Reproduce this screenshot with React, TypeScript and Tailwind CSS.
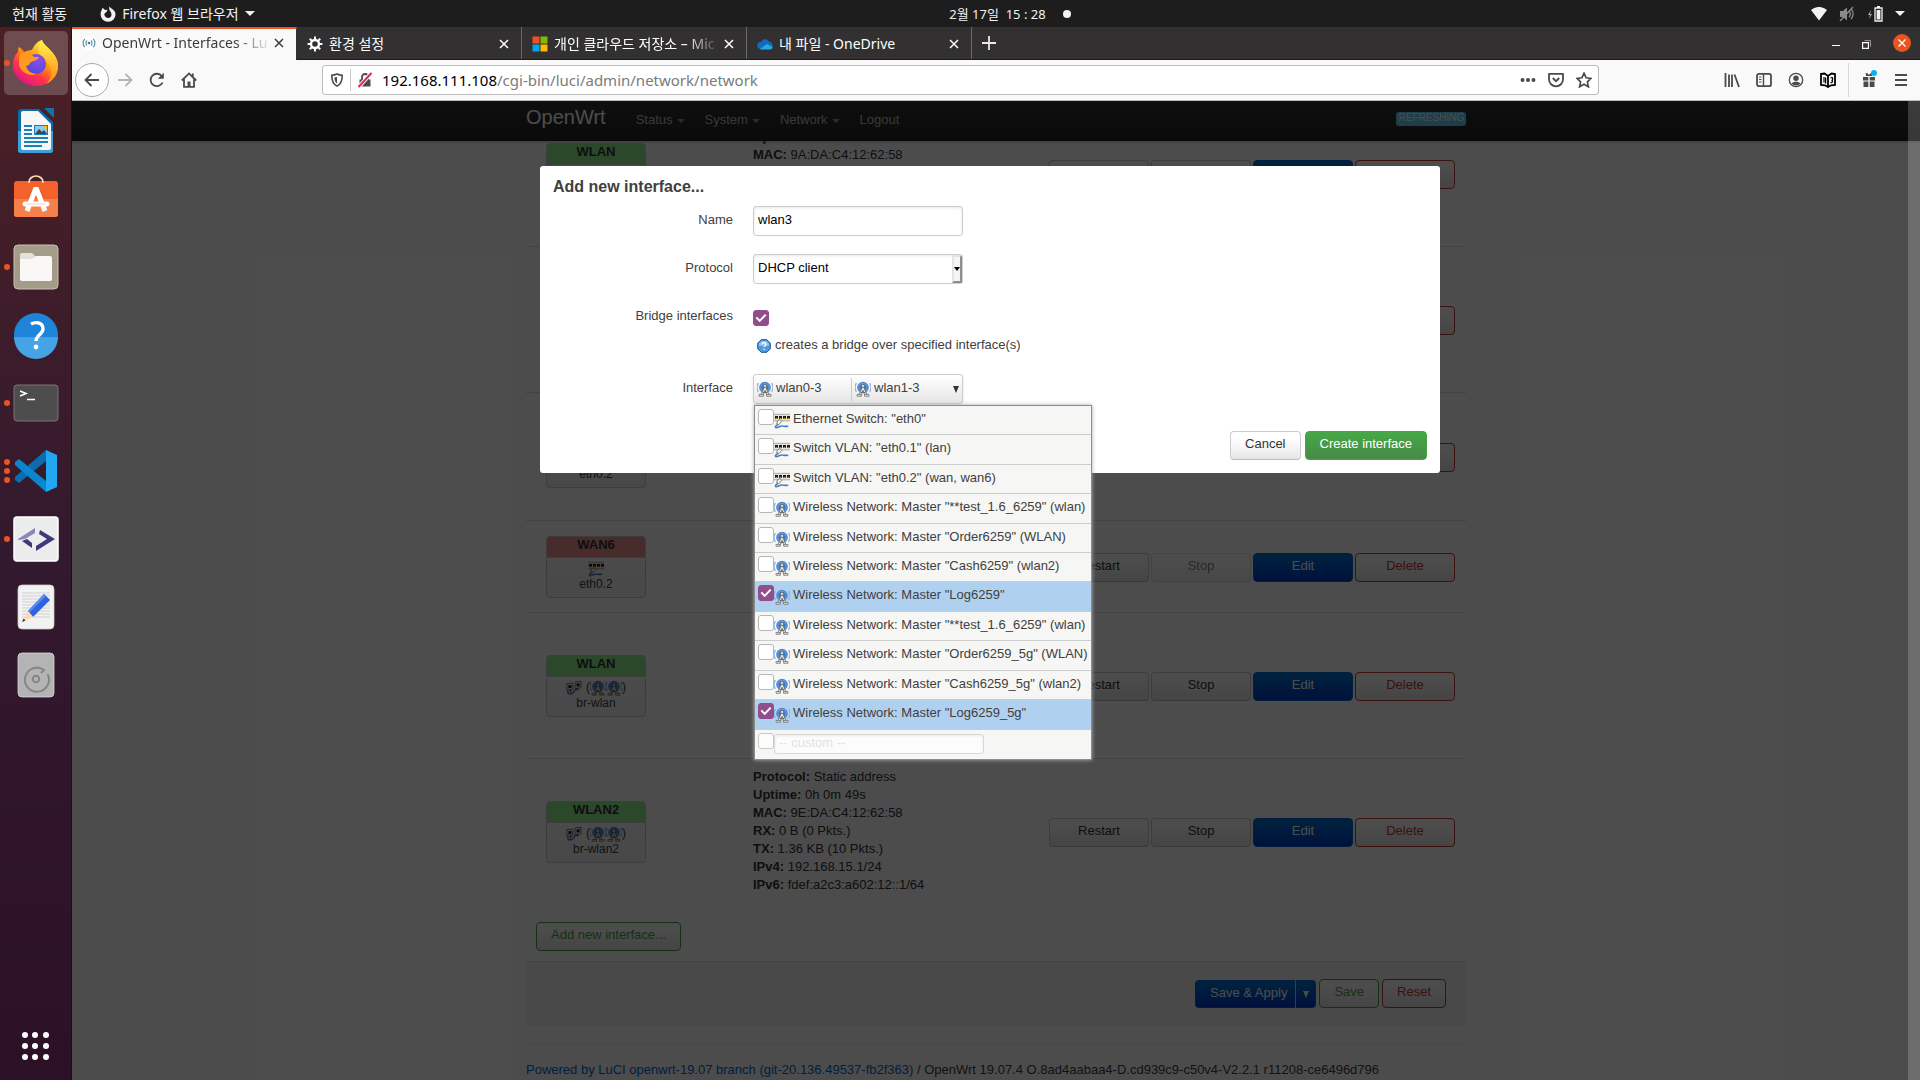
import React, { useState } from "react";

const UI = "font-['Noto_Sans','Noto_Sans_CJK_KR',sans-serif]";
const PAGE = "font-['Liberation_Sans','Noto_Sans_CJK_KR',sans-serif]";

/* ---------- small page icons ---------- */

function WifiIcon() {
  return (
    <svg width="16" height="16" viewBox="0 0 16 16" className="shrink-0" aria-hidden="true">
      <circle cx="8" cy="6.5" r="5.8" fill="#6d9fdc" />
      <circle cx="8" cy="6.5" r="3.6" fill="#3f78bf" />
      <circle cx="8" cy="6.5" r="5" fill="none" stroke="#4a80c4" strokeWidth="0.9" />
      <path d="M1.400 2.200a7.800 7.800 0 0 0 0 8.600M14.600 2.200a7.800 7.800 0 0 1 0 8.600" fill="none" stroke="#86aee0" strokeWidth="1.200" />
      <circle cx="8" cy="5" r="1.500" fill="#f4f4f2" stroke="#555753" strokeWidth="0.6" />
      <path d="M7.200 6.400L3.800 14h2.400L8 9.200l1.800 4.800h2.400L8.800 6.400z" fill="#eeeeec" stroke="#5c5e5a" strokeWidth="0.7" />
      <path d="M5.400 11.400h5.200" stroke="#6f716c" strokeWidth="1.200" />
      <path d="M2 13.400h4.400v1.900H2zM9.600 13.400H14v1.900H9.600z" fill="#d9dbd5" stroke="#6b6d68" strokeWidth="0.7" />
    </svg>
  );
}

function EthIcon() {
  return (
    <svg width="16" height="16" viewBox="0 0 16 16" className="shrink-0" aria-hidden="true">
      <rect x="0" y="1" width="16" height="7" fill="#e4e4de" />
      <path d="M0 1.300h16M0 7.800h16" stroke="#9c9d97" strokeWidth="0.8" />
      <path d="M1 3h3v3H1zM5 3h3v3H5zM9 3h3v3H9zM13 3h3v3h-3z" fill="#1c1c1a" />
      <path d="M1.500 5.400h2M5.500 5.400h2M9.500 5.400h2M13.500 5.400h2" stroke="#c4a000" strokeWidth="1" />
      <path d="M3 8.600l3-2.200 1.700 2-3 3.400-1.800-.8z" fill="#f2f2ef" stroke="#555753" strokeWidth="0.7" />
      <path d="M3.600 11.600C1.600 13 1 14.200 1.800 14.600c1.600.4 4-1.800 6.400-1.600 2 .1 3 .8 5.400.2" fill="none" stroke="#4a7cc0" strokeWidth="1.600" strokeLinecap="round" />
    </svg>
  );
}

function BridgeIcon() {
  return (
    <svg width="16" height="16" viewBox="0 0 16 16" className="shrink-0" aria-hidden="true">
      <path d="M.8 3.600l6-.6v6.400l-6 .8z" fill="#eeeeec" stroke="#666" strokeWidth="0.8" />
      <path d="M9 2l6-.8v6.600L9 8.600z" fill="#eeeeec" stroke="#666" strokeWidth="0.8" />
      <path d="M2.400 5.200l3-.3v3l-3 .3zM10.600 3.600l3-.3v3l-3 .3z" fill="#1c1c1a" />
      <path d="M2 10.600c-1 2.400.6 3.600 3 3.200 3.400-.6 2.400-4 5.400-4.600" fill="none" stroke="#4a7cc0" strokeWidth="1.600" strokeLinecap="round" />
      <path d="M4.600 9.400v3M11.600 8v2.400" stroke="#555" strokeWidth="1.400" />
    </svg>
  );
}

function HelpIcon() {
  return (
    <svg width="14" height="14" viewBox="0 0 14 14" className="shrink-0" aria-hidden="true">
      <path d="M4.200.7h5.600l3.500 3.500v5.600l-3.500 3.500H4.200L.7 9.800V4.200z" fill="#4f9be0" stroke="#1f4f8c" strokeWidth="1" />
      <path d="M4.700 1.900h4.600l2.800 2.800v2H1.900v-2z" fill="#8cc1f2" />
      <path d="M5.200 5.400c0-2.300 3.700-2.200 3.700 0 0 1.400-1.800 1.400-1.800 2.700M7.100 9.700v1.300" fill="none" stroke="#fff" strokeWidth="1.300" />
    </svg>
  );
}

/* ---------- form pieces ---------- */

function Tick({ id, label, initial = false }: { id: string; label?: string; initial?: boolean }) {
  const [on, setOn] = useState(initial);
  return (
    <span className="relative block size-4 shrink-0">
      <input
        id={id}
        type="checkbox"
        aria-label={label}
        checked={on}
        onChange={() => setOn(!on)}
        className="block size-4 appearance-none rounded-[3px] border border-[#b6b6b3] bg-white checked:border-[#924d8b] checked:bg-[#924d8b]"
      />
      {on && (
        <svg viewBox="0 0 16 16" className="pointer-events-none absolute inset-0 size-4" aria-hidden="true">
          <path d="M3.300 7.400l3.400 3.500 6-6.300" fill="none" stroke="#fff" strokeWidth="2" />
        </svg>
      )}
    </span>
  );
}

const BTN = "h-[29px] rounded border px-3.5 pb-[3px] text-[13px] leading-[18px]";
const PLAIN = "border-[#ccc] border-b-[#bbb] bg-linear-to-b from-white from-25% to-[#e6e6e6] text-[#333]";
const BLUE_BG = "bg-linear-to-b from-[#0074d0] to-[#0038c8] text-white";
const RED = "border-[#c43c35] bg-linear-to-b from-white from-25% to-[#e6e6e6] text-[#c43c35]";
const GREEN = "border-[#46a546] bg-linear-to-b from-white from-25% to-[#e6e6e6] text-[#46a546]";

/* ---------- interface table ---------- */

type Row = { name: string; dev: string; zone: "green" | "red"; kind: "eth" | "bridge"; stopped?: boolean; height: string; info: [string, string][] };

const rows: Row[] = [
  { name: "WLAN", dev: "", zone: "green", kind: "bridge", height: "h-[146px]", info: [["", ""], ["Uptime", ""], ["MAC", "9A:DA:C4:12:62:58"]] },
  { name: "", dev: "", zone: "green", kind: "bridge", height: "h-[146px]", info: [] },
  { name: "", dev: "eth0.2", zone: "red", kind: "eth", height: "h-32", info: [] },
  { name: "WAN6", dev: "eth0.2", zone: "red", kind: "eth", stopped: true, height: "h-[92px]", info: [] },
  { name: "WLAN", dev: "br-wlan", zone: "green", kind: "bridge", height: "h-[146px]", info: [] },
  {
    name: "WLAN2", dev: "br-wlan2", zone: "green", kind: "bridge", height: "h-[146px]",
    info: [["Protocol", "Static address"], ["Uptime", "0h 0m 49s"], ["MAC", "9E:DA:C4:12:62:58"], ["RX", "0 B (0 Pkts.)"], ["TX", "1.36 KB (10 Pkts.)"], ["IPv4", "192.168.15.1/24"], ["IPv6", "fdef:a2c3:a602:12::1/64"]],
  },
];

function IfaceBox({ row }: { row: Row }) {
  return (
    <div className="w-[100px] overflow-hidden rounded border border-[#ccc] bg-linear-to-b from-white to-[#f2f2f2] text-center">
      <div className={`h-[21px] border-b border-[#ccc] leading-4 font-bold text-[#333] ${row.zone === "green" ? "bg-[#90f090]" : "bg-[#f09090]"}`}>{row.name}</div>
      <div className="h-[39px] pt-[3px] text-[12px] leading-[15px] text-[#404040]">
        <div className="flex h-4 items-center justify-center">
          {row.kind === "eth" ? <EthIcon /> : (<><BridgeIcon /><span className="pl-1">(</span><WifiIcon /><WifiIcon /><span>)</span></>)}
        </div>
        {row.dev}
      </div>
    </div>
  );
}

function LuciPage() {
  return (
    <div className={`flex h-full flex-col bg-white text-[13px] leading-[18px] text-[#404040] ${PAGE}`}>
      <header className="relative z-10 h-10 shrink-0 bg-linear-to-b from-[#333] to-[#222] shadow-[0_1px_3px_rgba(0,0,0,0.25)]">
        <div className="mx-auto flex h-full w-[940px] max-w-full items-start">
          <a href="#home" className="pt-1.5 text-[20px] leading-5 text-white">OpenWrt</a>
          <nav className="ml-5 flex pt-2.5 text-[#bfbfbf]">
            {["Status", "System", "Network"].map((n) => (
              <a key={n} href={`#${n}`} className="flex items-center px-2.5">
                {n}
                <span className="mt-0.5 ml-1 border-x-4 border-t-4 border-x-transparent border-t-[#bfbfbf] opacity-70" />
              </a>
            ))}
            <a href="#logout" className="px-2.5">Logout</a>
          </nav>
          <span className="mt-[11px] ml-auto h-3.5 rounded-[3px] bg-[#62cffc] px-0.5 text-[10px] leading-[11px] text-white">REFRESHING</span>
        </div>
      </header>
      <main className="mx-auto -mt-[41px] w-[940px] max-w-full">
        <table className="w-full border-separate border-spacing-0">
          <tbody>
            {rows.map((r, i) => (
              <tr key={i} className={r.height}>
                <td className="w-[227px] border-t border-[#ddd] pl-5 align-middle"><IfaceBox row={r} /></td>
                <td className="border-t border-[#ddd] pt-[9px] pb-2.5 align-top text-[#333]">
                  {r.info.map(([k, v], j) => (
                    <div key={j} className="min-h-[18px]">{k && <b>{k}:</b>} {v}</div>
                  ))}
                </td>
                <td className="border-t border-[#ddd] pt-0.5 pr-[11px] align-middle">
                  <div className="flex justify-end gap-0.5">
                    <button className={`w-[100px] ${BTN} ${PLAIN}`}>Restart</button>
                    <button disabled={r.stopped} className={`w-[100px] disabled:opacity-60 ${BTN} ${PLAIN}`}>Stop</button>
                    <button className={`w-[100px] border-[#0069d6] ${BTN} ${BLUE_BG}`}>Edit</button>
                    <button className={`w-[100px] ${BTN} ${RED}`}>Delete</button>
                  </div>
                </td>
              </tr>
            ))}
          </tbody>
        </table>
        <button className={`mt-[18px] ml-2.5 block ${BTN} ${GREEN}`}>Add new interface...</button>
        <div className="mt-2.5 flex justify-end gap-[3px] rounded-b border-t border-[#ddd] bg-[#f5f5f5] pt-[17px] pr-5 pb-[18px]">
          <div className="mt-px flex h-7">
            <button className={`rounded-l border border-r-0 border-[#0069d6] pr-2 pb-0.5 pl-3.5 ${BLUE_BG}`}>Save &amp; Apply</button>
            <button aria-label="More apply options" className={`flex w-[21px] items-center justify-center rounded-r border border-[#0069d6] border-l-[#ccc] ${BLUE_BG}`}>
              <span className="border-x-[3px] border-t-[7px] border-x-transparent border-t-white" />
            </button>
          </div>
          <button className={`${BTN} ${GREEN}`}>Save</button>
          <button className={`${BTN} ${RED}`}>Reset</button>
        </div>
        <footer className="mt-[18px] border-t border-[#eee] pt-4 whitespace-nowrap">
          <a href="#luci" className="text-[#0069d6]">Powered by LuCI openwrt-19.07 branch (git-20.136.49537-fb2f363)</a> / OpenWrt 19.07.4 O.8ad4aabaa4-D.cd939c9-c50v4-V2.2.1 r11208-ce6496d796
        </footer>
      </main>
    </div>
  );
}

/* ---------- modal ---------- */

const options: { text: string; eth?: boolean; on?: boolean }[] = [
  { text: 'Ethernet Switch: "eth0"', eth: true },
  { text: 'Switch VLAN: "eth0.1" (lan)', eth: true },
  { text: 'Switch VLAN: "eth0.2" (wan, wan6)', eth: true },
  { text: 'Wireless Network: Master "**test_1.6_6259" (wlan)' },
  { text: 'Wireless Network: Master "Order6259" (WLAN)' },
  { text: 'Wireless Network: Master "Cash6259" (wlan2)' },
  { text: 'Wireless Network: Master "Log6259"', on: true },
  { text: 'Wireless Network: Master "**test_1.6_6259" (wlan)' },
  { text: 'Wireless Network: Master "Order6259_5g" (WLAN)' },
  { text: 'Wireless Network: Master "Cash6259_5g" (wlan2)' },
  { text: 'Wireless Network: Master "Log6259_5g"', on: true },
];

const FIELD = "h-[30px] w-[210px] rounded-[3px] border border-[#ccc] px-1 text-[13px] leading-[18px] text-black shadow-[inset_0_1px_3px_rgba(0,0,0,0.1)]";

function Modal() {
  return (
    <section role="dialog" aria-label="Add new interface..." className={`mx-auto w-[900px] max-w-full rounded-[3px] bg-white px-[13px] pt-3 pb-[13px] text-[13px] leading-[18px] text-[#404040] ${PAGE}`}>
      <h4 className="text-base leading-[18px] font-bold">Add new interface...</h4>
      <div className="mt-2.5 grid grid-cols-[180px_1fr] gap-x-5">
        <label htmlFor="f-name" className="pt-[5px] text-right">Name</label>
        <div className="h-12"><input id="f-name" defaultValue="wlan3" className={`pb-1 ${FIELD}`} /></div>

        <label htmlFor="f-proto" className="pt-[5px] text-right">Protocol</label>
        <div className="h-12">
          <div className="relative w-[210px]">
            <select id="f-proto" className={`appearance-none pb-0.5 ${FIELD}`}><option>DHCP client</option></select>
            <span className="pointer-events-none absolute inset-y-px right-px flex w-2.5 items-center justify-center border-2 border-t-[#e4e4e4] border-r-[#8f8f8f] border-b-[#8f8f8f] border-l-[#e4e4e4] bg-[#f6f5f4]">
              <span className="shrink-0 border-x-[3px] border-t-4 border-x-transparent border-t-black" />
            </span>
          </div>
        </div>

        <label htmlFor="f-bridge" className="pt-[5px] text-right">Bridge interfaces</label>
        <div className="h-[72px] pt-2">
          <Tick id="f-bridge" initial />
          <p className="mt-2.5 flex items-center gap-1 pl-1"><span className="pt-0.5"><HelpIcon /></span>creates a bridge over specified interface(s)</p>
        </div>

        <span id="f-iface" className="pt-[5px] text-right">Interface</span>
        <div className="relative h-[57px]">
          <button aria-labelledby="f-iface" aria-haspopup="listbox" className="flex h-[30px] w-[210px] items-center rounded-[3px] border border-[#ccc] bg-linear-to-b from-white to-[#e6e6e6] text-left shadow-sm">
            <span className="flex h-[23px] w-[98px] items-center gap-[3px] border-r border-[#ccc] pl-[3px]"><WifiIcon /><span className="pb-0.5">wlan0-3</span></span>
            <span className="flex flex-1 items-center gap-[3px] pl-[3px]"><WifiIcon /><span className="pb-0.5">wlan1-3</span></span>
            <span className="mr-[3px] border-x-[3px] border-t-[7px] border-x-transparent border-t-[#333]" />
          </button>
          <ul className="absolute top-[31px] left-px z-20 grid h-[355px] w-[338px] auto-rows-fr border border-[#8c8c8a] bg-[#f6f6f4] whitespace-nowrap shadow-[0_0_4px_#aaa]">
            {options.map((o, i) => (
              <li key={i} className={`flex items-start border-b border-[#ccc] pl-[3px] ${o.on ? "bg-[#b0d0f0]" : ""}`}>
                <span className="pt-[3px]"><Tick id={`opt-${i}`} initial={o.on} /></span>
                <span className="pt-[7px]">{o.eth ? <EthIcon /> : <WifiIcon />}</span>
                <label htmlFor={`opt-${i}`} className="pt-1 pl-[3px]">{o.text}</label>
              </li>
            ))}
            <li className="flex items-start pl-[3px]">
              <span className="pt-[3px] opacity-70"><Tick id="opt-custom" label="custom" /></span>
              <input aria-label="Custom interface" placeholder="-- custom --" className="mt-1 h-5 w-[210px] rounded-[3px] border border-[#d8d8d6] bg-[#fcfcfc] px-1 pb-0.5 text-[13px] leading-4 shadow-[inset_0_1px_3px_rgba(0,0,0,0.08)] placeholder:text-[#e2e2e2]" />
            </li>
          </ul>
        </div>
      </div>
      <div className="flex justify-end gap-1">
        <button className={`${BTN} ${PLAIN}`}>Cancel</button>
        <button className={`${BTN} border-[#46a546] bg-linear-to-b from-[#46a946] to-[#478a47] text-white`}>Create interface</button>
      </div>
    </section>
  );
}

/* ---------- dock ---------- */

const dockIcons: { name: string; dots: number; active?: boolean; art: React.ReactNode }[] = [
  {
    name: "Firefox", dots: 1, active: true,
    art: (
      <>
        <defs>
          <linearGradient id="fx" x1="0.8" y1="0.1" x2="0.25" y2="0.95"><stop offset="0" stopColor="#fff44f" /><stop offset="0.4" stopColor="#ff980e" /><stop offset="0.7" stopColor="#ff3647" /><stop offset="1" stopColor="#e31587" /></linearGradient>
          <linearGradient id="fy" x1="0.5" y1="0" x2="0.5" y2="1"><stop offset="0" stopColor="#fff44f" /><stop offset="0.5" stopColor="#ffbd2e" /><stop offset="1" stopColor="#ff8a16" /></linearGradient>
          <radialGradient id="fp" cx="0.6" cy="0.3" r="0.8"><stop offset="0" stopColor="#8f4be8" /><stop offset="1" stopColor="#4a4bd8" /></radialGradient>
        </defs>
        <path d="M30 1c1 4 5 6 9 11 4 4 7 9 7 15 0 12-10 20-22 20S1 38 1 26c0-6 2-10 5-13 0-2 0-4 1-5 2 1 4 3 5 5 2-1 5-2 8-2 2-5 6-9 10-10z" fill="url(#fx)" />
        <path d="M30 1c1 4 5 6 9 11 4 4 7 9 7 15 0 8-5 15-12 18 5-5 6-10 5-15-1-6-6-9-10-12-4-5-2-12 1-17z" fill="url(#fy)" />
        <circle cx="24" cy="25" r="10" fill="url(#fp)" />
        <path d="M8 15c6-3 11-1 14 3h5c-1 3-5 4-8 5-1 1-2 4-5 4 1 5 6 8 11 8-8 3-17-2-18-10 0-4 0-7 1-10z" fill="#ff9a1f" />
      </>
    ),
  },
  {
    name: "LibreOffice Writer", dots: 0,
    art: (
      <>
        <path d="M9 2h18l14 13v28a3 3 0 0 1-3 3H9a3 3 0 0 1-3-3V5a3 3 0 0 1 3-3z" fill="#0a6ca6" />
        <path d="M6 24h35v19a3 3 0 0 1-3 3H9a3 3 0 0 1-3-3z" fill="#3ea0d4" />
        <path d="M32 1h10v10z" fill="#1173ac" />
        <path d="M11 4h15l13 13v24a2 2 0 0 1-2 2H11a2 2 0 0 1-2-2V6a2 2 0 0 1 2-2z" fill="#f7f7f7" />
        <path d="M12 19h8M12 23h8M12 27h8M12 31h24M12 35h24M12 39h18" stroke="#1a80bd" strokeWidth="2" />
        <rect x="22" y="18" width="14" height="10" fill="#1a80bd" /><rect x="23" y="19" width="12" height="8" fill="#8ccbf0" />
        <path d="M23 27l4-5 3 3 2-2 3 4z" fill="#444" /><path d="M31 19h4v4z" fill="#f4c20d" />
      </>
    ),
  },
  {
    name: "Ubuntu Software", dots: 0,
    art: (
      <>
        <rect x="2" y="6" width="44" height="36" rx="3" fill="#f4622c" /><path d="M2 24h44v15a3 3 0 0 1-3 3H5a3 3 0 0 1-3-3z" fill="#f58049" />
        <path d="M17 8V7a7 6 0 0 1 14 0v1" fill="none" stroke="#fbdcae" strokeWidth="1.700" />
        <path d="M15 36l9-23 9 23" fill="none" stroke="#fff" strokeWidth="5" strokeLinejoin="bevel" /><path d="M13 29h22" stroke="#fff" strokeWidth="5" strokeLinecap="round" /><path d="M14 29h20" stroke="#f9cdbb" strokeWidth="1" />
      </>
    ),
  },
  {
    name: "Files", dots: 1,
    art: (
      <>
        <rect x="2" y="2" width="44" height="44" rx="4" fill="#a49c88" stroke="#c8c2b4" strokeWidth="1" />
        <path d="M8 18v-6a2 2 0 0 1 2-2h10l3 3v5z" fill="#e4e0da" /><path d="M8 16h12l4-3h14a2 2 0 0 1 2 2v21a2 2 0 0 1-2 2H10a2 2 0 0 1-2-2z" fill="#f9f8f7" />
      </>
    ),
  },
  {
    name: "Help", dots: 0,
    art: (
      <>
        <circle cx="24" cy="24" r="22" fill="#1d84d9" /><path d="M2 26a22 22 0 0 0 44 0z" fill="#45a3e6" />
        <path d="M19 13c6-3 12-1 12 5 0 5-7 6-7 12" fill="none" stroke="#fff" strokeWidth="3.400" /><circle cx="24" cy="36" r="2.400" fill="#fff" />
      </>
    ),
  },
  {
    name: "Terminal", dots: 1,
    art: (
      <>
        <rect x="2" y="6" width="44" height="36" rx="3" fill="#4d4d4d" stroke="#767676" strokeWidth="1" />
        <path d="M8 12l6 2.500L8 17M15 20.500h8" fill="none" stroke="#fff" strokeWidth="1.600" />
      </>
    ),
  },
  {
    name: "Visual Studio Code", dots: 3,
    art: (
      <>
        <path d="M34 3L3 30v3l4 3 27-22z" fill="#0b6db0" /><path d="M7 12l-4 3v3l31 27V34z" fill="#0a86d0" />
        <path d="M34 3l11 5v32l-11 5z" fill="#24a7f2" />
      </>
    ),
  },
  {
    name: "Notepadqq", dots: 1,
    art: (
      <>
        <rect x="2" y="2" width="44" height="44" rx="3" fill="#ececec" stroke="#fff" strokeWidth="1.500" />
        <path d="M23 13v5l-10 6-7 1v-1z" fill="#8a88b8" /><path d="M10 26l5-2 5 4v5z" fill="#3d3a7c" /><path d="M28 15l15 9-19 12v-5l11-7-8-5z" fill="#3d3a7c" />
      </>
    ),
  },
  {
    name: "Text Editor", dots: 0,
    art: (
      <>
        <rect x="6" y="2" width="36" height="44" rx="4" fill="#f2f2f2" stroke="#c9c9c9" strokeWidth="0.800" />
        <path d="M10 10h28M10 13h28M10 16h28M10 19h28M10 22h28M10 25h28M10 28h28M10 31h28M10 34h28" stroke="#d0d0d0" strokeWidth="1" />
        <path d="M32 11l6 6-17 17-5-6z" fill="#2e63dd" /><path d="M32 11l2 2-16 16-2-1z" fill="#5b8af2" /><path d="M16 28l5 6-11 5z" fill="#fbd9b5" /><path d="M11.500 35.500l-1.500 3.500 3.500-1.500z" fill="#333" />
      </>
    ),
  },
  {
    name: "Disk", dots: 0,
    art: (
      <>
        <rect x="6" y="2" width="36" height="44" rx="4" fill="#b4b4b4" stroke="#d8d8d8" strokeWidth="0.800" />
        <path d="M35.500 23A12 12 0 1 1 32 19l-3 3" fill="none" stroke="#868686" strokeWidth="2" /><circle cx="24" cy="28" r="3.200" fill="none" stroke="#868686" strokeWidth="2" />
      </>
    ),
  },
];

function Dock() {
  return (
    <nav aria-label="Dock" className="flex w-[72px] shrink-0 flex-col gap-1 border-r border-[#1c0d18] bg-linear-to-b from-[#4b2024] via-[#33192e] to-[#2c1126] px-1 pt-1">
      {dockIcons.map((d) => (
        <button key={d.name} aria-label={d.name} className={`relative flex size-16 shrink-0 items-center justify-center rounded-[5px] ${d.active ? "bg-white/20" : ""}`}>
          <span className="absolute inset-y-0 left-0 flex flex-col justify-center gap-[3px]">
            {Array.from({ length: d.dots }, (_, i) => <span key={i} className="size-1.5 rounded-full bg-[#e95420]" />)}
          </span>
          <svg width="48" height="48" viewBox="0 0 48 48" aria-hidden="true">{d.art}</svg>
        </button>
      ))}
      <button aria-label="Show Applications" className="mt-auto mb-[18px] grid size-8 grid-cols-3 place-items-center self-center">
        {Array.from({ length: 9 }, (_, i) => <span key={i} className="size-1.5 rounded-full bg-white" />)}
      </button>
    </nav>
  );
}

/* ---------- browser chrome ---------- */

function Close() {
  return <svg width="10" height="10" viewBox="0 0 10 10" className="shrink-0" aria-hidden="true"><path d="M1 1l8 8M9 1L1 9" stroke="currentColor" strokeWidth="1.500" /></svg>;
}

function Svg16({ children, size = 16 }: { children: React.ReactNode; size?: number }) {
  return <svg width={size} height={size} viewBox="0 0 16 16" fill="none" stroke="currentColor" strokeWidth="1.800" aria-hidden="true">{children}</svg>;
}

const gearSpokes = [0, 45, 90, 135, 180, 225, 270, 315];

const tabs = [
  { title: "OpenWrt - Interfaces - Lu", active: true, fade: true, icon: <svg width="14" height="14" viewBox="0 0 14 14"><circle cx="7" cy="7" r="7" fill="#fff" /><circle cx="7" cy="7" r="1.300" fill="#3d7a9a" /><path d="M5 4.500a3.500 3.500 0 0 0 0 5M9 4.500a3.500 3.500 0 0 1 0 5M2.800 2.800a6 6 0 0 0 0 8.400M11.200 2.800a6 6 0 0 1 0 8.400" fill="none" stroke="#5b90aa" strokeWidth="1.200" /></svg> },
  { title: "환경 설정", icon: <svg width="16" height="16" viewBox="0 0 16 16"><circle cx="8" cy="8" r="4" fill="none" stroke="#fff" strokeWidth="2.400" />{gearSpokes.map((a) => <path key={a} d="M8 .6v3" stroke="#fff" strokeWidth="2" transform={`rotate(${a} 8 8)`} />)}</svg> },
  { title: "개인 클라우드 저장소 – Mic", fade: true, icon: <svg width="16" height="16" viewBox="0 0 16 16"><path d="M.5.500h7v7h-7z" fill="#f25022" /><path d="M8.500.500h7v7h-7z" fill="#7fba00" /><path d="M.5 8.500h7v7h-7z" fill="#00a4ef" /><path d="M8.500 8.500h7v7h-7z" fill="#ffb900" /></svg> },
  { title: "내 파일 - OneDrive", icon: <svg width="16" height="16" viewBox="0 0 16 16"><path d="M4 6a4.500 4.500 0 0 1 8-.5 4 4 0 0 1 1.500 7.500h-10A3.500 3.500 0 0 1 4 6z" fill="#0f6cbd" /><path d="M3 13l7-5 5.500 3a2.300 2.300 0 0 1-2 2.500H3.500z" fill="#28a8ea" /></svg> },
];

function Browser() {
  return (
    <div className="flex min-w-0 flex-1 flex-col">
      <div className={`flex h-[33px] shrink-0 border-b border-[#1c1b1c] bg-[#323031] text-[14px] ${UI}`}>
        {tabs.map((t) => (
          <div key={t.title} className={`flex w-[225px] shrink-0 items-center gap-1.5 border-r border-[#6b6a6b] pr-3 pl-2.5 ${t.active ? "-mb-px border-t-2 border-t-[#e95420] border-r-[#323031] bg-[#f9f9fa] pb-[3px] text-[#3c3c3c]" : "pt-0.5 text-white"}`}>
            <span className="shrink-0">{t.icon}</span>
            <span className={`min-w-0 flex-1 leading-5 whitespace-nowrap ${t.fade ? "[mask-image:linear-gradient(to_right,black_80%,transparent_102%)]" : ""}`}>{t.title}</span>
            <button aria-label="Close tab" className="shrink-0"><Close /></button>
          </div>
        ))}
        <button aria-label="New tab" className="ml-2.5 text-white"><svg width="14" height="14" viewBox="0 0 14 14" aria-hidden="true"><path d="M7 0v14M0 7h14" stroke="#e8e8e8" strokeWidth="1.800" /></svg></button>
        <div className="ml-auto flex items-center gap-[22px] pr-[9px] text-white">
          <button aria-label="Minimize" className="pt-1"><span className="block h-px w-2 bg-white" /></button>
          <button aria-label="Restore" className="pt-0.5"><svg width="9" height="9" viewBox="0 0 9 9" aria-hidden="true"><path d="M.6 2.600h5.800v5.800H.6z" fill="none" stroke="#fff" strokeWidth="1.200" /><path d="M2.500.6h6v6" fill="none" stroke="#999" strokeWidth="1" /></svg></button>
          <button aria-label="Close window" className="flex size-[18px] items-center justify-center rounded-full bg-[#e95420]"><svg width="8" height="8" viewBox="0 0 8 8" aria-hidden="true"><path d="M.5.500l7 7M7.500.500l-7 7" stroke="#fff" strokeWidth="1.300" /></svg></button>
        </div>
      </div>

      <div className={`flex h-[41px] shrink-0 items-center border-b border-[#bdbdbd] bg-[#f9f9fa] text-[#4a4a4b] ${UI}`}>
        <button aria-label="Back" className="ml-[3px] flex size-[34px] items-center justify-center rounded-full border border-[#a8a8a9] bg-white"><Svg16><path d="M15 8H1.500M7.500 2L1.500 8l6 6" /></Svg16></button>
        <div className="ml-2 flex gap-4">
          <button aria-label="Forward" className="text-[#b5b5b6]"><Svg16><path d="M1 8h13.500M8.500 2l6 6-6 6" /></Svg16></button>
          <button aria-label="Reload"><Svg16><path d="M13.500 10.500A6.200 6.200 0 1 1 12.800 4.200" /><path d="M14.800.8v6h-6z" fill="currentColor" stroke="none" /></Svg16></button>
          <button aria-label="Home"><Svg16><path d="M.8 8.500L8 1.400l7.200 7.100M3 7v7.800h10V7M11.800 1.500v3" /><path d="M6.500 9.500h3V15h-3z" fill="currentColor" stroke="none" /></Svg16></button>
        </div>
        <div className="ml-[125px] flex h-[30px] min-w-0 flex-1 items-center rounded-[3px] border border-[#bcbcbc] bg-white pr-1.5 pl-[7px]">
          <Svg16 size={14}><path d="M8 1.200c2 1 4 1.400 6 1.400 0 6-1 10-6 12.400C3 12.600 2 8.600 2 2.600c2 0 4-.4 6-1.400z" /><path d="M8 4.500v7.500c-2-1.500-2.800-4-3-7z" fill="currentColor" stroke="none" /></Svg16>
          <span className="mx-1.5 h-[22px] w-px bg-[#c8c8c8]" />
          <Svg16><path d="M2.500 7.500h11v7h-11z" fill="currentColor" stroke="none" /><path d="M5 8V5a3 3 0 0 1 6 0v3" /><path d="M1.500 15L14.500 1" stroke="#fff" strokeWidth="4" /><path d="M1.500 15L14.500 1" stroke="#e22850" strokeWidth="2" /></Svg16>
          <a href="#url" className="ml-[9px] flex-1 truncate text-[15px] leading-5 text-[#7b7b7b]"><span className="text-black">192.168.111.108</span>/cgi-bin/luci/admin/network/network</a>
          <div className="flex items-center gap-3">
            <button aria-label="Page actions"><Svg16><path d="M.5 8a2 2 0 1 0 4 0 2 2 0 1 0-4 0zM6 8a2 2 0 1 0 4 0 2 2 0 1 0-4 0zM11.500 8a2 2 0 1 0 4 0 2 2 0 1 0-4 0z" fill="currentColor" stroke="none" /></Svg16></button>
            <button aria-label="Save to Pocket"><Svg16><path d="M1 1.800h14v5.500a7 7 0 0 1-14 0z" strokeLinejoin="round" /><path d="M4.800 6L8 9.200 11.200 6" /></Svg16></button>
            <button aria-label="Bookmark"><Svg16><path d="M8 1.200l2.100 4.600 4.900.6-3.600 3.400 1 5L8 12.300l-4.400 2.500 1-5L1 6.400l4.900-.6z" strokeWidth="1.700" /></Svg16></button>
          </div>
        </div>
        <div className="ml-[125px] flex items-center gap-4">
          <button aria-label="Library"><Svg16><path d="M1.500 1v14M5 2.500V15M8 2.500V15M10.500 2.500L15 15" /></Svg16></button>
          <button aria-label="Sidebar"><Svg16><rect x="1" y="1.800" width="14" height="12.400" rx="2" /><path d="M7.500 2v12" strokeWidth="1.400" /><path d="M3 5h2.500M3 7.500h2.500M3 10h2.500" strokeWidth="1" /></Svg16></button>
          <button aria-label="Account"><Svg16><circle cx="8" cy="8" r="6.700" strokeWidth="1.300" /><circle cx="8" cy="6.200" r="2.700" fill="currentColor" stroke="none" /><path d="M3.500 11.500c2-2.300 7-2.300 9 0a6 6 0 0 1-9 0z" fill="currentColor" stroke="none" /></Svg16></button>
          <button aria-label="Reader" className="text-black"><Svg16><path d="M1 2l3.500-.5L8 4l3.500-2.500L15 2v11l-4 .3L8 15l-3-1.700L1 13zM8 4v10.500" /><path d="M4 5v5.500M5.600 5.500v6M10.500 6c3-1.500 2.500 2 1 2.500 1.500 0 1.500 2.500-1 2" strokeWidth="1.200" /></Svg16></button>
        </div>
        <span className="mx-3 h-[34px] w-px bg-[#d7d7d8]" />
        <div className="flex gap-4 pr-[11px]">
          <button aria-label="What's new" className="relative"><Svg16><path d="M2 5h5.300v3.500H2zM8.700 5H14v3.500H8.700zM2.500 9.500h4.800V15H2.500zM8.700 9.500h4.800V15H8.700zM4.500 1.200h2L8 3l1.500-1.800h2L10.800 4H5.200z" fill="currentColor" stroke="none" /></Svg16><span className="absolute -top-0.5 right-0 size-1.5 rounded-full bg-[#00b3f4]" /></button>
          <button aria-label="Menu"><Svg16><path d="M2 3h12M2 8h12M2 13h12" /></Svg16></button>
        </div>
      </div>

      <div className="relative min-h-0 flex-1">
        <div className="h-full overflow-hidden"><LuciPage /></div>
        <div className="absolute inset-0 z-20 flex bg-black/70">
          <div className="min-w-0 flex-1 pt-[65px]"><Modal /></div>
          <div className="w-3 bg-[#f0f0f0]/20" />
        </div>
      </div>
    </div>
  );
}

export default function App() {
  return (
    <div className="flex h-screen flex-col overflow-hidden bg-[#1d1d1d]">
      <header className={`grid h-[27px] shrink-0 grid-cols-[1fr_auto_1fr] items-center bg-[#1d1d1d] text-[14px] leading-5 text-[#f2f2f2] ${UI}`}>
        <div className="flex items-center pl-3">
          <button>현재 활동</button>
          <button className="ml-[33px] flex items-center gap-1.5">
            <svg width="16" height="16" viewBox="0 0 16 16" aria-hidden="true"><path d="M9.500.5c.3 1.600 6 3 6 8A7.300 7.300 0 0 1 8 15.800 7.300 7.300 0 0 1 .6 8.500C.6 5.500 2 4 2.600 1.800L5 4l2.400-.2-.7 2-2.200 1.700A3.600 3.600 0 0 0 8 12a3.500 3.500 0 0 0 3.500-3.600C11.500 5.500 8 4.500 9.500.5z" fill="#f2f2f2" /></svg>
            Firefox 웹 브라우저
            <span className="border-x-[5px] border-t-[5px] border-x-transparent border-t-[#f2f2f2]" />
          </button>
        </div>
        <button className="flex items-center gap-[17px] pl-[100px] text-[13px] whitespace-pre"><span>2월 17일  15 : 28</span><span className="size-2 rounded-full bg-[#f2f2f2]" /></button>
        <div className="flex items-center justify-end gap-3 pr-[15px]">
          <svg width="16" height="14" viewBox="0 0 16 14" aria-hidden="true"><path d="M0 3a12 12 0 0 1 16 0L8 13.500z" fill="#f2f2f2" /></svg>
          <svg width="16" height="16" viewBox="0 0 16 16" aria-hidden="true"><path d="M1 5h3l4-3.500v13L4 11H1z" fill="#8a8a8a" /><path d="M10 5a4 4 0 0 1 0 6M12 3a7 7 0 0 1 0 10M1 15L14 1" fill="none" stroke="#8a8a8a" strokeWidth="1.300" /></svg>
          <svg width="16" height="16" viewBox="0 0 16 16" aria-hidden="true"><path d="M4 4L1 9h2l-1 4 3-5H3z" fill="#aaa" /><path d="M8 2h7v13H8z" fill="none" stroke="#f2f2f2" strokeWidth="1.300" /><path d="M9.600 4h3.800v9.500H9.600zM10 0h3v2h-3z" fill="#f2f2f2" /></svg>
          <span className="border-x-[5px] border-t-[5px] border-x-transparent border-t-[#f2f2f2]" />
        </div>
      </header>
      <div className="flex min-h-0 flex-1">
        <Dock />
        <Browser />
      </div>
    </div>
  );
}
